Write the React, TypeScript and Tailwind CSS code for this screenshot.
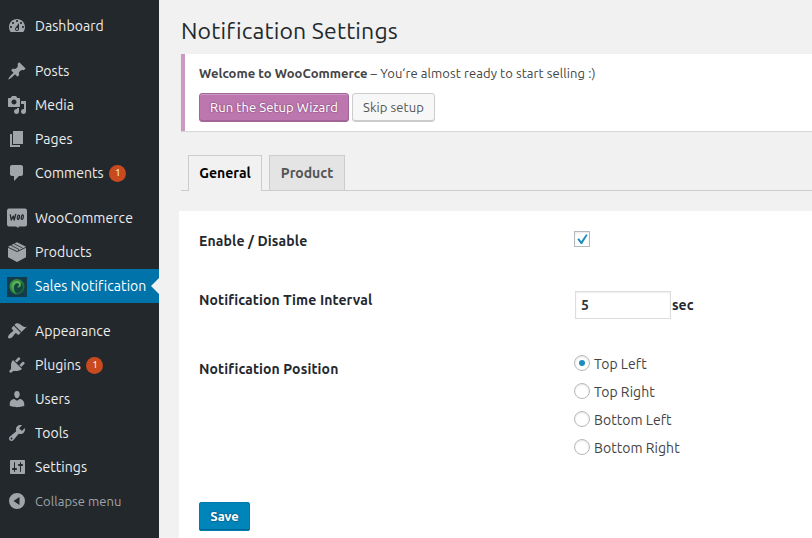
import React from "react";

const icons: Record<string, string> = {
  dashboard:
    "M3.76 16h12.48c1.1-1.37 1.76-3.11 1.76-5 0-4.42-3.58-8-8-8s-8 3.58-8 8c0 1.89.66 3.63 1.76 5zM10 4c.55 0 1 .45 1 1s-.45 1-1 1-1-.45-1-1 .45-1 1-1zM6 6c.55 0 1 .45 1 1s-.45 1-1 1-1-.45-1-1 .45-1 1-1zm8 0c.55 0 1 .45 1 1s-.45 1-1 1-1-.45-1-1 .45-1 1-1zm-5.37 5.55L12 7v6c0 1.1-.9 2-2 2s-2-.9-2-2c0-.57.24-1.08.63-1.45zM4 10c.55 0 1 .45 1 1s-.45 1-1 1-1-.45-1-1 .45-1 1-1zm12 0c.55 0 1 .45 1 1s-.45 1-1 1-1-.45-1-1 .45-1 1-1zm-5 3c0-.55-.45-1-1-1s-1 .45-1 1 .45 1 1 1 1-.45 1-1z",
  post: "M10.44 3.02l1.82-1.82 6.36 6.35-1.83 1.82c-1.05-.68-2.48-.57-3.41.36l-.75.75c-.92.93-1.04 2.35-.35 3.41l-1.83 1.82-2.41-2.41-2.8 2.79c-.42.42-3.38 2.71-3.8 2.29s1.86-3.39 2.28-3.81l2.79-2.79L4.1 9.36l1.83-1.82c1.05.69 2.48.57 3.4-.36l.75-.75c.93-.92 1.05-2.35.36-3.41z",
  media:
    "M13 11V4c0-.55-.45-1-1-1h-1.67L9 1H5L3.67 3H2c-.55 0-1 .45-1 1v7c0 .55.45 1 1 1h10c.55 0 1-.45 1-1zM7 4.5c1.38 0 2.5 1.12 2.5 2.5S8.38 9.5 7 9.5 4.5 8.38 4.5 7 5.62 4.5 7 4.5zM14 6h5v10.5c0 1.38-1.12 2.5-2.5 2.5S14 17.88 14 16.5s1.12-2.5 2.5-2.5c.17 0 .34.02.5.05V9h-3V6zm-4 8.05V13h2v3.5c0 1.38-1.12 2.5-2.5 2.5S7 17.88 7 16.5 8.12 14 9.5 14c.17 0 .34.02.5.05z",
  page: "M6 15V2h10v13H6zm-1 1h8v2H3V5h2v11z",
  comments:
    "M5 2h9c1.1 0 2 .9 2 2v7c0 1.1-.9 2-2 2h-2l-5 5v-5H5c-1.1 0-2-.9-2-2V4c0-1.1.9-2 2-2z",
  appearance:
    "M14.48 11.06L7.41 3.99l1.5-1.5c.5-.56 2.3-.47 3.51.32 1.21.8 1.43 1.28 2.91 2.1 1.18.64 2.45 1.26 4.45.85zm-.71.71L6.7 4.7 4.93 6.47c-.39.39-.39 1.02 0 1.41l1.06 1.06c.39.39.39 1.03 0 1.42-.6.6-1.43 1.11-2.21 1.69-.35.26-.7.53-1.01.84C1.43 14.23.4 16.08 1.4 17.07c.99 1 2.84-.03 4.18-1.36.31-.31.58-.66.85-1.02.57-.78 1.08-1.61 1.69-2.21.39-.39 1.02-.39 1.41 0l1.06 1.06c.39.39 1.02.39 1.41 0z",
  plugins:
    "M13.11 4.36L9.87 7.6 8 5.73l3.24-3.24c.35-.34 1.05-.2 1.56.32.52.51.66 1.21.31 1.55zm-8 1.77l.91-1.12 9.01 9.01-1.19.84c-.71.71-2.63 1.16-3.82 1.16H6.14L4.9 17.26c-.59.59-1.54.59-2.12 0-.59-.58-.59-1.53 0-2.12l1.24-1.24v-3.88c0-1.13.4-3.19 1.09-3.89zm7.26 3.97l3.24-3.24c.34-.35 1.04-.21 1.55.31.52.51.66 1.21.31 1.55l-3.24 3.25z",
  users:
    "M10 9.25c-2.27 0-2.73-3.44-2.73-3.44C7 4.02 7.82 2 9.97 2c2.16 0 2.98 2.02 2.71 3.81 0 0-.41 3.44-2.68 3.44zm0 2.57L12.72 10c2.39 0 4.52 2.33 4.52 4.53v2.49s-3.65 1.13-7.24 1.13c-3.65 0-7.24-1.13-7.24-1.13v-2.49c0-2.25 1.94-4.48 4.47-4.48z",
  tools:
    "M16.68 9.77c-1.34 1.34-3.3 1.67-4.95.99l-5.41 6.52c-.99.99-2.59.99-3.58 0s-.99-2.59 0-3.57l6.52-5.42c-.68-1.65-.35-3.61.99-4.95 1.28-1.28 3.12-1.62 4.72-1.06l-2.89 2.89 2.82 2.82 2.86-2.87c.53 1.58.18 3.39-1.08 4.65zM3.81 16.21c.4.39 1.04.39 1.43 0 .4-.4.4-1.04 0-1.43-.39-.4-1.03-.4-1.43 0-.39.39-.39 1.03 0 1.43z",
  settings:
    "M18 16V4c0-.55-.45-1-1-1H4c-.55 0-1 .45-1 1v12c0 .55.45 1 1 1h13c.55 0 1-.45 1-1zM8 11h1c.55 0 1 .45 1 1s-.45 1-1 1H8v1.500c0 .28-.22.5-.5.5s-.5-.22-.5-.5V13H6c-.55 0-1-.45-1-1s.45-1 1-1h1V5.500c0-.28.22-.5.5-.5s.5.22.5.5V11zm5-2h-1c-.55 0-1-.45-1-1s.45-1 1-1h1V5.500c0-.28.22-.5.5-.5s.5.22.5.5V7h1c.55 0 1 .45 1 1s-.45 1-1 1h-1v5.500c0 .28-.22.5-.5.5s-.5-.22-.5-.5V9z",
  collapse:
    "M10 2a8 8 0 1 0 0 16a8 8 0 1 0 0-16zM12.500 6v8L6.500 10z",
};

function MenuIcon({ name }: { name: string }) {
  if (name === "woo") {
    return (
      <svg viewBox="0 0 20 20" className="h-5 w-5 shrink-0 fill-[#a0a5aa]">
        <path d="M2 .5h16q2 0 2 2v14q0 2-2 2h-6.300l-.3 1.500-2.400-1.500H2q-2 0-2-2v-14q0-2 2-2z" />
        <g fill="none" stroke="#23282d" strokeWidth="1.300" strokeLinecap="round" strokeLinejoin="round">
          <path d="M3.300 6.800l1 5.200 2-4 .9 4 1.500-5.600" />
          <ellipse cx="11.400" cy="9.300" rx="1" ry="2.200" transform="rotate(12 11.400 9.300)" />
          <ellipse cx="15.300" cy="9.100" rx="1" ry="2.200" transform="rotate(12 15.300 9.100)" />
        </g>
      </svg>
    );
  }
  if (name === "products") {
    return (
      <svg viewBox="0 0 20 20" className="h-5 w-5 shrink-0">
        <path d="M10 .3l9 4.400v10.600l-9 4.700-9-4.700V4.700z" fill="#a0a5aa" />
        <path d="M1 5.300l9 4.200 9-4.200" fill="none" stroke="#23282d" strokeWidth=".9" />
        <path d="M4 3.400l7.600 3.800v2M7.200 1.900l8.200 4" fill="none" stroke="#23282d" strokeWidth=".8" />
      </svg>
    );
  }
  if (name === "sales") {
    return (
      <svg viewBox="0 0 20 20" className="relative top-px h-5 w-5 shrink-0">
        <defs>
          <linearGradient id="ring" x1="0" y1="0" x2="1" y2="1">
            <stop offset="0" stopColor="#3f9a45" />
            <stop offset=".5" stopColor="#2b7d3f" />
            <stop offset="1" stopColor="#17523f" />
          </linearGradient>
          <linearGradient id="swirl" x1="0" y1="0" x2="0" y2="1">
            <stop offset="0" stopColor="#63b856" />
            <stop offset="1" stopColor="#2f9a45" />
          </linearGradient>
        </defs>
        <rect width="20" height="20" fill="#123c4c" />
        <path
          d="M10 2a7.700 7.700 0 1 1-3.500 14.600C2.200 14 1.200 8.200 4.200 4.800A7.700 7.700 0 0 1 10 2z"
          fill="url(#ring)"
        />
        <path d="M8.800 15.500C4.800 11.200 6.500 6.300 10.600 5.300c4-.7 6.300 3.400 4.600 7-1.200 2.600-4 4-6.400 3.200z" fill="#13463f" />
        <path
          d="M9.500 17.800C2.800 13.500 2.800 4.600 9.900 4.100c4.400-.2 5.600 5.300 2.100 6.300-1.200.3-1.800-.4-1.500-1 1.500.3 2.300-2.600.2-3.200-3.800-.7-5.600 5.400-1.200 11.600z"
          fill="url(#swirl)"
        />
      </svg>
    );
  }
  return (
    <svg viewBox="0 0 20 20" className="h-5 w-5 shrink-0 fill-[#a0a5aa]">
      <path fillRule="evenodd" d={icons[name]} />
    </svg>
  );
}

type Item = { icon: string; label: string; badge?: number; active?: boolean };

const groups: Item[][] = [
  [{ icon: "dashboard", label: "Dashboard" }],
  [
    { icon: "post", label: "Posts" },
    { icon: "media", label: "Media" },
    { icon: "page", label: "Pages" },
    { icon: "comments", label: "Comments", badge: 1 },
  ],
  [
    { icon: "woo", label: "WooCommerce" },
    { icon: "products", label: "Products" },
    { icon: "sales", label: "Sales Notification", active: true },
  ],
  [
    { icon: "appearance", label: "Appearance" },
    { icon: "plugins", label: "Plugins", badge: 1 },
    { icon: "users", label: "Users" },
    { icon: "tools", label: "Tools" },
    { icon: "settings", label: "Settings" },
  ],
];

function MenuItem({ icon, label, badge, active }: Item) {
  return (
    <li
      className={`relative flex h-[34px] items-center gap-2 pl-[7px] text-[14px] leading-[18px] ${
        active ? "bg-[#0073aa] text-white" : "text-[#eeeeee]"
      }`}
    >
      <MenuIcon name={icon} />
      <span className="whitespace-nowrap tracking-[0.06px]">{label}</span>
      {badge && (
        <span className="-ml-[2.5px] flex h-[17px] w-[17px] items-center justify-center rounded-full bg-[#ca4a1f] text-[10px] leading-none text-white">
          {badge}
        </span>
      )}
      {active && (
        <span className="absolute top-[9px] right-0 h-0 w-0 border-y-8 border-r-8 border-y-transparent border-r-[#f1f1f1]" />
      )}
    </li>
  );
}

function Sidebar() {
  return (
    <nav className="w-[159px] shrink-0 bg-[#23282d] pt-[9px]">
      <ul className="flex flex-col gap-[11px]">
        {groups.map((items, i) => (
          <li key={i}>
            <ul>
              {items.map((item) => (
                <MenuItem key={item.label} {...item} />
              ))}
            </ul>
          </li>
        ))}
      </ul>
      <div className="flex h-[34px] items-center gap-2 pl-[7px] text-[13px] text-[#a0a5aa]">
        <MenuIcon name="collapse" />
        <span className="whitespace-nowrap pt-0.5 tracking-[0.06px]">Collapse menu</span>
      </div>
    </nav>
  );
}

function Notice() {
  return (
    <div className="ml-[22px] h-[77px] border-l-4 border-[#cc99c2] bg-white pt-[10px] pl-[14px] text-[13px] tracking-[0.08px] text-[#444444] shadow-[0_1px_1px_0_rgba(0,0,0,0.1)]">
      <p className="whitespace-nowrap leading-[19px]">
        <strong className="font-bold tracking-[0.04px]">Welcome to WooCommerce</strong> – You‘re almost ready to start
        selling :)
      </p>
      <div className="mt-[10px] flex gap-[3px]">
        <button className="h-[29px] w-[150px] whitespace-nowrap rounded-[3px] border border-[#a36597] bg-[#bb77ae] text-white shadow-[inset_0_1px_0_rgba(255,255,255,0.25),inset_0_-1px_0_#a36597] [text-shadow:0_-1px_1px_#a36597,1px_0_1px_#a36597,0_1px_1px_#a36597,-1px_0_1px_#a36597]">
          Run the Setup Wizard
        </button>
        <button className="h-[29px] w-[83px] whitespace-nowrap rounded-[3px] border border-[#cccccc] bg-[#f7f7f7] text-[#555555] shadow-[inset_0_-1px_0_#cccccc]">
          Skip setup
        </button>
      </div>
    </div>
  );
}

function Tabs() {
  return (
    <div className="mt-6 ml-[22px] flex h-9 gap-[7px] border-b border-[#cccccc] pl-[7px] text-[14px] font-bold leading-[34px]">
      <div className="h-9 w-[74px] border border-b-0 border-[#cccccc] bg-[#f1f1f1] text-center text-black">
        General
      </div>
      <div className="h-[35px] w-[76px] border border-b-0 border-[#cccccc] bg-[#e4e4e4] text-center text-[#555555]">
        Product
      </div>
    </div>
  );
}

function Radio({ label, checked }: { label: string; checked?: boolean }) {
  return (
    <label className="flex h-7 items-center gap-1 text-[14px] text-[#444444]">
      <span className="mb-px flex h-4 w-4 items-center justify-center rounded-full border border-[#b4b9be] bg-white shadow-[inset_0_1px_2px_rgba(0,0,0,0.1)]">
        {checked && <span className="h-1.5 w-1.5 rounded-full bg-[#1e8cbe]" />}
      </span>
      <span className="whitespace-nowrap pt-0.5 tracking-[0.04px]">{label}</span>
    </label>
  );
}

function SettingsForm() {
  return (
    <div className="mt-5 ml-5 flex grow flex-col bg-white pl-5 text-[14px] font-bold text-[#23282d]">
      <div className="flex pt-5">
        <div className="w-[375px] leading-5 tracking-[0.13px]">Enable / Disable</div>
        <div className="flex h-4 w-4 items-center justify-center border border-[#b4b9be] bg-white shadow-[inset_0_1px_2px_rgba(0,0,0,0.1)]">
          <svg viewBox="0 0 14 14" className="h-3.5 w-3.5 shrink-0">
            <path d="M2.300 7.300l1.800-1 2.100 2.900 4.900-6.900 1.500.7-5.500 9H5.800z" fill="#1e8cbe" />
          </svg>
        </div>
      </div>
      <div className="mt-10 flex">
        <div className="w-[376px] leading-[18px] tracking-[0.11px]">Notification Time Interval</div>
        <div className="flex h-7 w-24 items-center border border-[#dddddd] bg-white pl-[5px] text-[#32373c] shadow-[inset_0_1px_2px_rgba(0,0,0,0.07)]">
          5
        </div>
        <span className="pl-px leading-[28px]">sec</span>
      </div>
      <div className="mt-[30px] flex">
        <div className="w-[375px] pt-[11px] leading-[18px] tracking-[0.12px]">Notification Position</div>
        <div className="font-normal">
          <Radio label="Top Left" checked />
          <Radio label="Top Right" />
          <Radio label="Bottom Left" />
          <Radio label="Bottom Right" />
        </div>
      </div>
      <button className="mt-[41px] h-[29px] w-[51px] rounded-[3px] bg-[#0085ba] text-[13px] font-bold text-white shadow-[inset_0_0_0_1px_#0079ad,inset_0_-2px_0_#006799] [text-shadow:0_-1px_1px_#006799,1px_0_1px_#006799,0_1px_1px_#006799,-1px_0_1px_#006799]">
        Save
      </button>
    </div>
  );
}

export default function App() {
  return (
    <div className="flex h-[538px] w-[812px] overflow-hidden bg-[#f1f1f1] font-['Ubuntu','Noto_Sans',sans-serif]">
      <Sidebar />
      <main className="flex min-w-0 grow flex-col">
        <h1 className="mt-4 mb-[9px] ml-[22px] h-[29px] whitespace-nowrap text-[23px] leading-[29px] tracking-[0.17px] text-[#23282d]">
          Notification Settings
        </h1>
        <Notice />
        <Tabs />
        <SettingsForm />
      </main>
    </div>
  );
}
